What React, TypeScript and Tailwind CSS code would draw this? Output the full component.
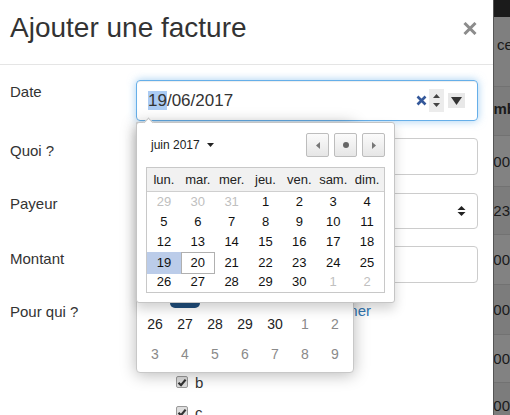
import React from "react";

const frontRows: { d: number; o?: boolean }[][] = [
  [{ d: 29, o: true }, { d: 30, o: true }, { d: 31, o: true }, { d: 1 }, { d: 2 }, { d: 3 }, { d: 4 }],
  [{ d: 5 }, { d: 6 }, { d: 7 }, { d: 8 }, { d: 9 }, { d: 10 }, { d: 11 }],
  [{ d: 12 }, { d: 13 }, { d: 14 }, { d: 15 }, { d: 16 }, { d: 17 }, { d: 18 }],
  [{ d: 19 }, { d: 20 }, { d: 21 }, { d: 22 }, { d: 23 }, { d: 24 }, { d: 25 }],
  [{ d: 26 }, { d: 27 }, { d: 28 }, { d: 29 }, { d: 30 }, { d: 1, o: true }, { d: 2, o: true }],
];

const heads = ["lun.", "mar.", "mer.", "jeu.", "ven.", "sam.", "dim."];

function Check({ label }: { label: string }) {
  return (
    <div className="h-[30px] flex items-center pl-[40px] gap-[7px]">
      <span className="w-[12px] h-[12px] rounded-[2px] border border-[#9a9a9a] bg-[#dedede] flex items-center justify-center">
        <svg width="10" height="9" viewBox="0 0 10 9">
          <path d="M1.5 4.8 L4 7.2 L8.6 1.6" fill="none" stroke="#333" strokeWidth="2.2" />
        </svg>
      </span>
      <span className="text-[15px] text-[#333] leading-[21px]">{label}</span>
    </div>
  );
}

export default function App() {
  return (
    <div className="w-[510px] h-[415px] overflow-hidden flex font-['Liberation_Sans',Arial,sans-serif]">
      <div className="relative w-[494px] h-full bg-white border-r border-[#555] shrink-0">
        {/* header */}
        <div className="h-[65px] border-b border-[#e5e5e5] flex items-start justify-between pl-[10px] pr-[16px] pt-[12px]">
          <h3 className="text-[28px] leading-[31px] text-[#333]">Ajouter une facture</h3>
          <svg width="14" height="13" viewBox="0 0 14 13" className="mt-[10px]">
            <path d="M1.5 1 L12.5 12 M12.5 1 L1.5 12" stroke="#8c8c8c" strokeWidth="3" />
          </svg>
        </div>

        {/* form */}
        <div className="pt-[15px] pr-[15px]">
          <div className="flex">
            <label className="w-[136px] pl-[10px] pt-[1px] text-[15px] leading-[21px] text-[#333]">Date</label>
            <div className="flex-1 h-[41px] rounded-[4px] border border-[#66afe9] shadow-[inset_0_1px_1px_rgba(0,0,0,0.075),0_0_8px_rgba(102,175,233,0.6)] flex items-center pl-[11px] pr-[12px]">
              <span className="text-[17px] leading-[18px] text-[#333]">
                <span className="bg-[#abcbf3]">19</span>/06/2017
              </span>
              <div className="ml-auto flex items-center">
                <svg width="11" height="11" viewBox="0 0 11 11">
                  <path d="M1.5 1.5 L9.5 9.5 M9.5 1.5 L1.5 9.5" stroke="#34589a" strokeWidth="2.6" />
                </svg>
                <div className="ml-[2px] w-[15px] h-[23px] bg-[#ececec] flex flex-col items-center justify-center gap-[5px]">
                  <svg width="7" height="4" viewBox="0 0 7 4"><path d="M0 4 L3.5 0 L7 4 Z" fill="#444" /></svg>
                  <svg width="7" height="4" viewBox="0 0 7 4"><path d="M0 0 L3.5 4 L7 0 Z" fill="#444" /></svg>
                </div>
                <div className="ml-[4px] w-[17px] h-[15px] bg-[#e8e8e8] flex items-center justify-center">
                  <svg width="11" height="8" viewBox="0 0 11 8"><path d="M0 0 L11 0 L5.5 8 Z" fill="#333" /></svg>
                </div>
              </div>
            </div>
          </div>

          <div className="flex mt-[17px]">
            <label className="w-[136px] pl-[10px] pt-[2px] text-[15px] leading-[21px] text-[#333]">Quoi ?</label>
            <div className="flex-1 h-[37px] rounded-[4px] border border-[#ccc]" />
          </div>

          <div className="flex mt-[18px]">
            <label className="w-[136px] pl-[10px] pt-[0px] text-[15px] leading-[21px] text-[#333]">Payeur</label>
            <div className="flex-1 h-[36px] rounded-[4px] border border-[#ccc] flex items-center justify-end pr-[11px]">
              <svg width="9" height="10" viewBox="0 0 9 10">
                <path d="M0.5 4 L4.5 0 L8.5 4 Z M0.5 6 L4.5 10 L8.5 6 Z" fill="#222" />
              </svg>
            </div>
          </div>

          <div className="flex mt-[17px]">
            <label className="w-[136px] pl-[10px] pt-[2px] text-[15px] leading-[21px] text-[#333]">Montant</label>
            <div className="flex-1 h-[37px] rounded-[4px] border border-[#ccc]" />
          </div>

          <div className="flex mt-[17px]">
            <label className="w-[136px] pl-[10px] pt-[1px] text-[15px] leading-[21px] text-[#333]">Pour qui ?</label>
            <div className="flex-1 flex flex-col">
              <div className="w-[235px] flex justify-end whitespace-nowrap text-[15px] leading-[21px] text-[#337ab7]">
                Tout sélectionner
              </div>
              <div className="mt-[16px]">
                <Check label="a" />
                <Check label="b" />
                <Check label="c" />
              </div>
            </div>
          </div>
        </div>

        {/* native date picker (behind) */}
        <div className="absolute left-[136px] top-[122px] z-10 w-[218px] h-[251px] bg-white border border-[#c8c8c8] rounded-b-[4px] shadow-[0_2px_16px_rgba(0,0,0,0.28)] flex flex-col justify-end px-[3px] pb-[3px]">
          <div className="grid grid-cols-7 w-[210px] h-[30px]">
            <div />
            <div className="relative">
              <div className="absolute left-[0px] right-[0px] top-[2px] bottom-[1px] rounded-[5px] bg-[#1f4e7c]" />
            </div>
          </div>
          {[
            [26, 27, 28, 29, 30, 1, 2],
            [3, 4, 5, 6, 7, 8, 9],
          ].map((r, ri) => (
            <div key={ri} className="grid grid-cols-7 w-[210px] h-[30px]">
              {r.map((d, i) => (
                <div
                  key={i}
                  className={`flex items-center justify-center text-[14px] ${
                    ri === 0 && i < 5 ? "text-[#222]" : "text-[#8a8a8a]"
                  }`}
                >
                  {d}
                </div>
              ))}
            </div>
          ))}
        </div>

        {/* front datepicker */}
        <div className="absolute left-[136px] top-[122px] z-20 w-[259px] h-[181px] bg-white border border-[#c5c5c5] rounded-[3px] shadow-[0_6px_12px_rgba(0,0,0,0.18)] px-[9px] pt-[10px]">
          <div className="h-[24px] flex items-center justify-between">
            <div className="ml-[5px] flex items-center gap-[7px] text-[12px] text-[#222]">
              <span>juin 2017</span>
              <svg width="7" height="4" viewBox="0 0 7 4"><path d="M0 0 L7 0 L3.5 4 Z" fill="#222" /></svg>
            </div>
            <div className="flex gap-[5px]">
              <div className="w-[23px] h-[24px] rounded-[2px] border border-[#bdbdbd] bg-gradient-to-b from-[#fbfbfb] to-[#e6e6e6] flex items-center justify-center">
                <svg width="4" height="7" viewBox="0 0 4 7"><path d="M4 0 L0 3.5 L4 7 Z" fill="#777" /></svg>
              </div>
              <div className="w-[23px] h-[24px] rounded-[2px] border border-[#bdbdbd] bg-gradient-to-b from-[#fbfbfb] to-[#e6e6e6] flex items-center justify-center">
                <span className="w-[6px] h-[6px] rounded-full bg-[#666]" />
              </div>
              <div className="w-[23px] h-[24px] rounded-[2px] border border-[#bdbdbd] bg-gradient-to-b from-[#fbfbfb] to-[#e6e6e6] flex items-center justify-center">
                <svg width="4" height="7" viewBox="0 0 4 7"><path d="M0 0 L4 3.5 L0 7 Z" fill="#777" /></svg>
              </div>
            </div>
          </div>
          <div className="mt-[10px] w-[239px] border border-[#c8c8c8]">
            <div className="grid grid-cols-7 h-[24px] bg-[#f1f1f1] border-b border-[#cfcfcf]">
              {heads.map((h) => (
                <div key={h} className="flex items-center justify-center text-[13px] text-[#222]">
                  {h}
                </div>
              ))}
            </div>
            {frontRows.map((r, ri) => (
              <div key={ri} className="grid grid-cols-7 h-[20px]">
                {r.map((c, i) => {
                  const sel = ri === 3 && i === 0;
                  const today = ri === 3 && i === 1;
                  return (
                    <div
                      key={i}
                      className={`flex items-center justify-center text-[13px] ${
                        c.o ? "text-[#c0c0c0]" : "text-[#111]"
                      } ${sel ? "bg-[#bbcce9]" : ""} ${today ? "border border-[#b0b0b0]" : ""}`}
                    >
                      {c.d}
                    </div>
                  );
                })}
              </div>
            ))}
          </div>
        </div>
        {/* popup arrow */}
        <div className="absolute left-[145px] top-[119px] z-30 w-[7px] h-[7px] bg-white border-l border-t border-[#c5c5c5] rotate-45" />
      </div>

      {/* backdrop */}
      <div className="flex-1 min-w-0 flex flex-col overflow-hidden text-[15px] leading-[21px] text-[#1a1a1a] whitespace-nowrap">
        <div className="h-[17px] bg-[#1b1b1b] shrink-0" />
        <div className="h-[70px] bg-[#7f7f7f] border-b border-[#727272] pl-[3px] pt-[17px] shrink-0">ce</div>
        <div className="h-[49px] bg-[#7c7c7c] border-b border-[#727272] flex items-start pt-[11px] justify-end font-bold shrink-0">
          <span className="mr-[-6px]">mb</span>
        </div>
        <div className="h-[51px] bg-[#828282] border-b border-[#727272] flex items-center justify-end shrink-0">10,00</div>
        <div className="h-[48px] bg-[#7c7c7c] border-b border-[#727272] flex items-center justify-end shrink-0">12,23</div>
        <div className="h-[50px] bg-[#828282] border-b border-[#727272] flex items-center justify-end shrink-0">20,00</div>
        <div className="h-[50px] bg-[#7c7c7c] border-b border-[#727272] flex items-center justify-end shrink-0">15,00</div>
        <div className="h-[48px] bg-[#828282] border-b border-[#727272] flex items-center justify-end shrink-0">30,00</div>
        <div className="h-[40px] bg-[#7c7c7c] flex items-start pt-[12px] justify-end shrink-0">40,00</div>
      </div>
    </div>
  );
}
